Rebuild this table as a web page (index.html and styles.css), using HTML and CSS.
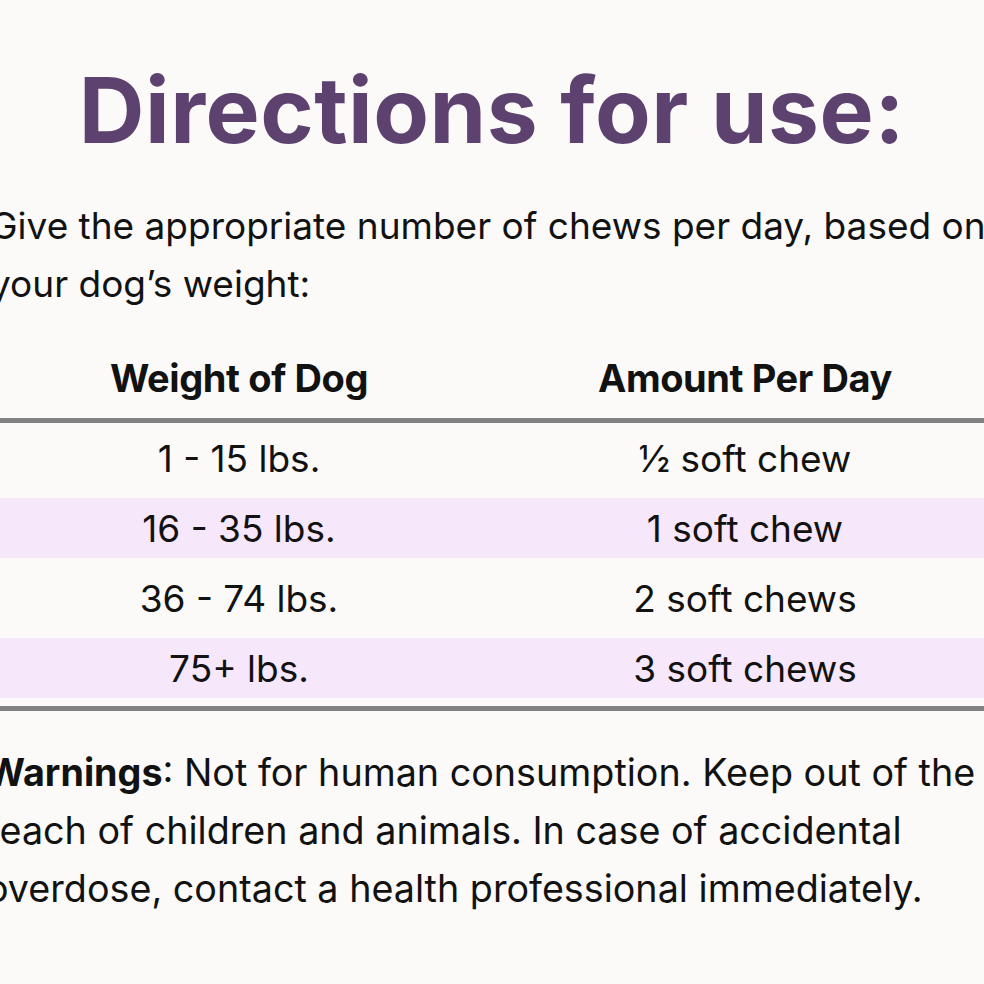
FILE: index.html
```html
<!DOCTYPE html>
<html lang="en">
<head>
<meta charset="utf-8">
<title>Directions for use</title>
<link rel="stylesheet" href="styles.css">
</head>
<body>
<main class="page">
  <h1 class="title">Directions for use:</h1>
  <p class="intro">Give the appropriate number of chews per day, based on<br>your dog’s weight:</p>
  <section class="dosage">
    <div class="dosage-head">
      <div class="cell">Weight of Dog</div>
      <div class="cell">Amount Per Day</div>
    </div>
    <div class="dosage-body">
      <div class="row"><div class="cell">1 - 15 lbs.</div><div class="cell">½ soft chew</div></div>
      <div class="row row-alt"><div class="cell">16 - 35 lbs.</div><div class="cell">1 soft chew</div></div>
      <div class="row"><div class="cell">36 - 74 lbs.</div><div class="cell">2 soft chews</div></div>
      <div class="row row-alt"><div class="cell">75+ lbs.</div><div class="cell">3 soft chews</div></div>
    </div>
  </section>
  <p class="warning"><strong>Warnings</strong>: Not for human consumption. Keep out of the<br>reach of children and animals. In case of accidental<br>overdose, contact a health professional immediately.</p>
</main>
</body>
</html>
```
FILE: styles.css
```css
html, body {
  margin: 0;
  padding: 0;
  overflow: hidden;
  background: #fbfaf8;
}
body {
  font-family: Inter, Roboto, "Liberation Sans", sans-serif;
  color: #121212;
}
.page {
  width: 1012px;
  margin-left: -14px;
  padding-top: 60px;
}
.title {
  margin: 0;
  font-size: 91px;
  line-height: 100px;
  font-weight: 700;
  color: #5d4270;
  text-align: center;
  letter-spacing: 0.5px;
}
.intro {
  margin: 37px 0 0 4px;
  font-size: 37px;
  line-height: 58px;
  white-space: nowrap;
}
.dosage {
  margin-top: 40px;
}
.dosage-head {
  display: grid;
  grid-template-columns: 1fr 1fr;
  font-size: 38px;
  line-height: 50px;
  font-weight: 700;
  letter-spacing: -0.4px;
  padding-bottom: 15px;
  border-bottom: 5px solid #828282;
}
.dosage-body {
  display: flex;
  flex-direction: column;
  gap: 10px;
  padding: 5px 0 8px;
  border-bottom: 5px solid #828282;
}
.row {
  display: grid;
  grid-template-columns: 1fr 1fr;
  align-items: center;
  height: 60px;
  font-size: 37px;
}
.row-alt {
  background: #f6e7fb;
}
.cell {
  text-align: center;
}
.warning {
  margin: 32px 0 0 0;
  font-size: 37.7px;
  line-height: 58px;
  white-space: nowrap;
}
.warning strong {
  font-weight: 700;
}
```
